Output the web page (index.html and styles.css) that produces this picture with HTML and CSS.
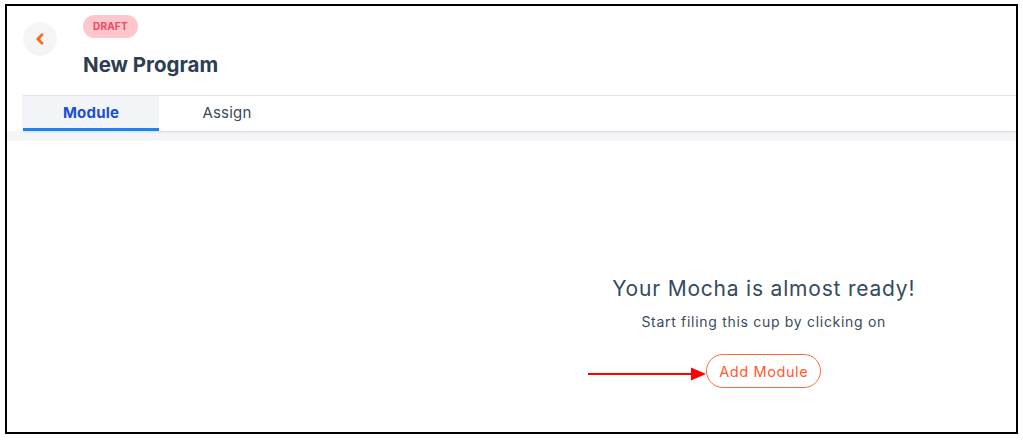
FILE: index.html
```html
<!DOCTYPE html>
<html lang="en">
<head>
    <meta charset="UTF-8">
    <meta name="viewport" content="width=device-width, initial-scale=1.0">
    <title>New Program</title>
    <link rel="stylesheet" href="styles.css">
</head>
<body>
    <div class="frame">
        <div class="header">
            <button class="back-btn" aria-label="Back">
                <svg width="10" height="12" viewBox="0 0 10 12">
                    <path d="M7 1.8 L2.8 6 L7 10.2" fill="none" stroke="#ff6a13" stroke-width="2.8" stroke-linecap="round" stroke-linejoin="round"/>
                </svg>
            </button>
            <div class="title-block">
                <span class="badge">DRAFT</span>
                <h1 class="title">New Program</h1>
            </div>
        </div>

        <div class="tabs">
            <div class="tab active">Module</div>
            <div class="tab">Assign</div>
        </div>
        <div class="strip"></div>

        <div class="main">
            <div class="left-pane"></div>
            <div class="empty-state">
                <h2 class="empty-title">Your Mocha is almost ready!</h2>
                <p class="empty-text">Start filing this cup by clicking on</p>
                <div class="cta-wrap">
                    <!-- annotation arrow -->
                    <svg class="arrow" width="119" height="14" viewBox="0 0 119 14">
                        <line x1="0" y1="7" x2="105" y2="7" stroke="#ff0000" stroke-width="2"/>
                        <polygon points="103,0.5 118,7 103,13.5" fill="#ff0000"/>
                    </svg>
                    <button class="add-btn">Add Module</button>
                </div>
            </div>
        </div>
    </div>
</body>
</html>
```

FILE: styles.css
```css
body {
    margin: 0;
    font-family: "Inter", "Liberation Sans", sans-serif;
    background-color: #fff;
    color: #2f4054;
}
.frame {
    box-sizing: border-box;
    width: 1013px;
    height: 430px;
    margin: 4px 0 0 5px;
    border: 2px solid #000;
    display: flex;
    flex-direction: column;
    overflow: hidden;
}
.header {
    display: flex;
    align-items: flex-start;
    gap: 26px;
    padding: 9px 0 0 16px;
    height: 89px;
    box-sizing: border-box;
}
.back-btn {
    width: 34px;
    height: 34px;
    margin-top: 7px;
    border: none;
    border-radius: 50%;
    background-color: #f5f5f7;
    display: flex;
    align-items: center;
    justify-content: center;
    padding: 0;
    cursor: pointer;
}
.title-block {
    display: flex;
    flex-direction: column;
    align-items: flex-start;
}
.badge {
    display: inline-block;
    height: 23px;
    line-height: 23px;
    padding: 0 10px;
    border-radius: 12px;
    background-color: #ffc7cb;
    color: #f4465c;
    font-size: 10px;
    font-weight: 700;
    letter-spacing: 0.2px;
}
.title {
    margin: 13px 0 0;
    font-size: 20.5px;
    line-height: 28px;
    font-weight: 700;
    color: #2d3e52;
}
.tabs {
    display: flex;
    margin-left: 16px;
    border-top: 1px solid #e4e6ea;
    height: 35px;
    box-shadow: 0 1px 2px rgba(0, 0, 0, 0.12);
    position: relative;
}
.tab {
    width: 136px;
    display: flex;
    align-items: center;
    justify-content: center;
    font-size: 15px;
    letter-spacing: 0.2px;
    color: #3b4a5c;
    box-sizing: border-box;
    padding-bottom: 3px;
}
.tab.active {
    background-color: #f3f4f8;
    color: #1a4fd4;
    font-weight: 700;
    border-bottom: 3px solid #1b84ee;
    padding-bottom: 0;
}
.strip {
    height: 10px;
    background-color: #f4f5f8;
}
.main {
    flex: 1;
    display: grid;
    grid-template-columns: 1fr 1fr;
}
.empty-state {
    display: flex;
    flex-direction: column;
    align-items: center;
    padding-top: 134px;
}
.empty-title {
    margin: 0;
    font-size: 21px;
    line-height: 28px;
    font-weight: 400;
    letter-spacing: 0.8px;
    color: #354a60;
}
.empty-text {
    margin: 9px 0 0;
    font-size: 14px;
    line-height: 20px;
    letter-spacing: 0.7px;
    color: #3b4a5c;
}
.cta-wrap {
    position: relative;
    margin-top: 22px;
}
.arrow {
    position: absolute;
    right: 100%;
    top: 13px;
    margin-right: -1px;
}
.add-btn {
    height: 34px;
    padding: 0 12px;
    border: 1px solid #ff6b3d;
    border-radius: 17px;
    background-color: #fff;
    color: #ff5b2e;
    font-family: "Inter", "Liberation Sans", sans-serif;
    font-size: 14.5px;
    letter-spacing: 0.6px;
    cursor: pointer;
}
```
